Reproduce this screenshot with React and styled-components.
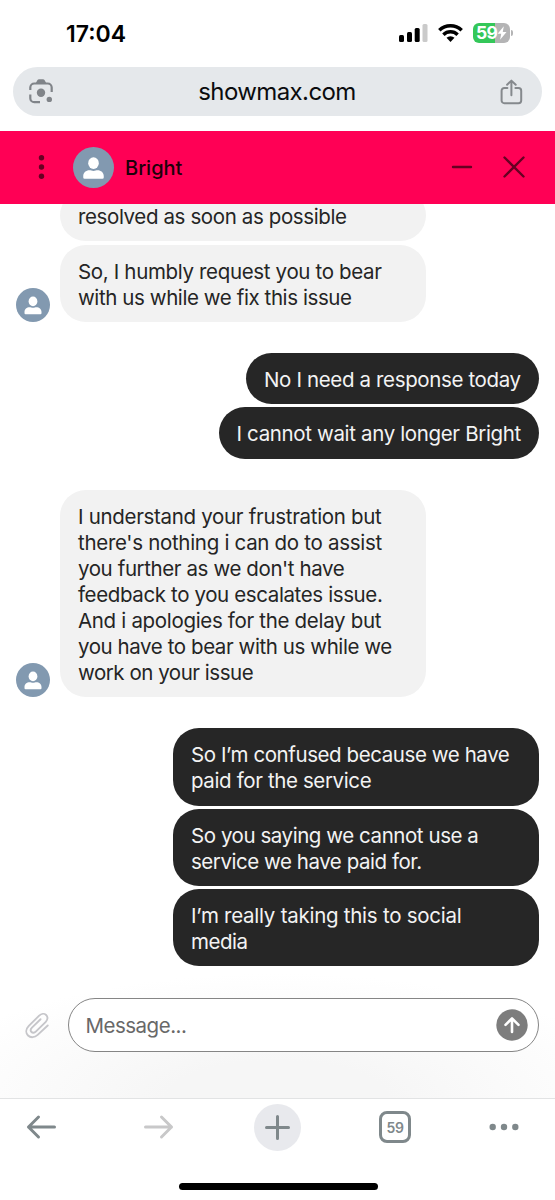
import React from 'react'
import styled, { createGlobalStyle } from 'styled-components'

const GlobalStyle = createGlobalStyle`
   * {
      box-sizing:border-box;
   }

   body {
      margin:0;
      background:#fff;
      font-family:Inter, "Liberation Sans", sans-serif;
   }

   svg {
      display:block;
      flex:none;
   }
`

const Screen = styled.div`
   display:flex;
   flex-direction:column;
   width:555px;
   height:1200px;
   overflow:hidden;
   background:#fff;
`

const StatusBar = styled.div`
   display:flex;
   justify-content:space-between;
   align-items:center;
   height:67px;
   padding:0 42px 0 66px;
`

const Clock = styled.span`
   font-size:23px;
   font-weight:600;
   line-height:28px;
   color:#000;
`

const StatusIcons = styled.div`
   display:flex;
   align-items:center;
   gap:10px;
   padding-bottom:1px;
`

const Battery = styled.div`
   display:flex;
   align-items:center;
   gap:1px;
`

const BatteryBody = styled.div`
   display:flex;
   align-items:center;
   justify-content:center;
   width:37px;
   height:20px;
   border-radius:6px;
   background:linear-gradient(90deg, #34c759 59%, #b4b4b5 59%);
   color:#fff;
   font-size:17.5px;
   font-weight:700;
   line-height:20px;
   letter-spacing:-0.9px;
`

const BatteryTip = styled.div`
   width:2px;
   height:6px;
   border-radius:0 2px 2px 0;
   background:#b4b4b5;
`

const AddressBar = styled.div`
   display:flex;
   align-items:center;
   justify-content:space-between;
   height:49px;
   margin:0 13px 14.5px;
   padding:0 19px 0 15px;
   border-radius:25px;
   background:#e5e8eb;
`

const Address = styled.span`
   font-size:24px;
   line-height:30px;
   letter-spacing:-0.6px;
   color:#0b0c0e;
`

const ChatHeader = styled.header`
   display:flex;
   align-items:center;
   height:73px;
   padding:0 30.5px 0 36px;
   background:#ff0055;
`

const Agent = styled.div`
   flex:1;
   margin-left:11px;
   padding-top:1px;
   font-size:20px;
   font-weight:500;
   line-height:26px;
   color:#1c0009;
`

const Avatar = styled.div`
   display:flex;
   flex:none;
   width:${props => props.$size}px;
   height:${props => props.$size}px;
   margin-left:${props => props.$left || 0}px;
   border-radius:50%;
   background:#8299b0;
`

const HeaderIcons = styled.div`
   display:flex;
   align-items:center;
   gap:30px;
`

const Messages = styled.main`
   display:flex;
   flex-direction:column;
   justify-content:flex-end;
   gap:31.3px;
   height:763px;
   padding:0 16px 0.2px 15.5px;
   overflow:hidden;
`

const Group = styled.section`
   display:flex;
   flex:none;
   align-items:flex-end;
   gap:10.5px;
   justify-content:${props => props.$mine ? 'flex-end' : 'flex-start'};
`

const Bubbles = styled.div`
   display:flex;
   flex-direction:column;
   align-items:${props => props.$mine ? 'flex-end' : 'flex-start'};
   gap:3.2px;
`

const Bubble = styled.div`
   width:${props => props.$width}px;
   padding:14px 0 11.2px 18px;
   border-radius:26px;
   background:${props => props.$mine ? '#262626' : '#f2f2f2'};
   color:${props => props.$mine ? '#f3f3f3' : '#252525'};
`

const Line = styled.div`
   font-size:20.5px;
   line-height:26px;
   letter-spacing:${props => props.$spacing || 0}px;
   white-space:nowrap;
`

const Composer = styled.footer`
   display:flex;
   align-items:center;
   height:131px;
   padding:0 16px 15px 22.5px;
   gap:17px;
   background:radial-gradient(ellipse 66% 95% at 50% 100%, #f6f6f6 30%, #fff 100%);
`

const Field = styled.div`
   display:flex;
   flex:1;
   align-items:center;
   justify-content:space-between;
   height:54px;
   padding:0 10px 0 17px;
   border:1px solid #858585;
   border-radius:27px;
   background:#fff;
   color:#686868;
`

const Placeholder = styled(Line)`
   padding-top:2px;
`

const Toolbar = styled.nav`
   display:grid;
   grid-template-columns:82px 154px 83px 152px 66px;
   justify-items:center;
   align-items:center;
   height:58px;
   border-top:1px solid #e2e3e4;
`

const NewTab = styled.div`
   display:flex;
   align-items:center;
   justify-content:center;
   width:47px;
   height:47px;
   border-radius:50%;
   background:#e8e9ed;
`

const TabCount = styled.div`
   display:flex;
   align-items:center;
   justify-content:center;
   width:32px;
   height:32px;
   border:3px solid #7f888b;
   border-radius:8px;
   color:#7f888b;
   font-size:14px;
   font-weight:600;
   letter-spacing:-0.3px;
`

const HomeIndicator = styled.div`
   width:199px;
   height:7px;
   margin:27px 0 0 178.5px;
   border-radius:4px;
   background:#000;
`

const Signal = () => (
   <svg width="29" height="18" viewBox="0 0 29 18">
      <rect x="0" y="11" width="5" height="7" rx="1.5" fill="#000" />
      <rect x="8" y="8" width="5" height="10" rx="1.5" fill="#000" />
      <rect x="15.7" y="4" width="5" height="14" rx="1.5" fill="#000" />
      <rect x="23.5" y="0" width="5" height="18" rx="1.5" fill="#cacaca" />
   </svg>
)

const Wifi = () => (
   <svg width="25" height="18" viewBox="0 0 25 18">
      <g fill="none" stroke="#000" strokeWidth="3.4">
         <path d="M1.3 6.3a16 16 0 0 1 22.4 0" />
         <path d="M5.4 10.7a10 10 0 0 1 14.2 0" />
      </g>
      <path d="M8.5 13.8a5.8 5.8 0 0 1 8 0L12.5 18z" fill="#000" />
   </svg>
)

const Bolt = () => (
   <svg width="10" height="14" viewBox="0 0 9 13">
      <path d="M6.2.3.4 7.3h3.4L2.7 12.7 8.7 5.5H5.2z" fill="#fff" />
   </svg>
)

const Lens = () => (
   <svg width="26" height="25" viewBox="0 0 26 25">
      <path d="M2.3 11V8.500a4 4 0 0 1 4-4h13.400a4 4 0 0 1 4 4V13M2.300 15.500v3.700a4 4 0 0 0 4 4H12" fill="none" stroke="#808489" strokeWidth="2.2" />
      <path d="M7.5 4.5 9.5.9Q10 .2 11 .2h4q1 0 1.5.7l2 3.6z" fill="#808489" />
      <circle cx="13" cy="13.7" r="4.2" fill="#808489" />
      <circle cx="21.3" cy="20.4" r="2.7" fill="#808489" />
   </svg>
)

const Share = () => (
   <svg width="23" height="26" viewBox="0 0 23 26" fill="none" stroke="#85898d" strokeWidth="2" strokeLinecap="round" strokeLinejoin="round">
      <path d="M7.4 9H4.3a2.7 2.7 0 0 0-2.7 2.7v9.8a2.7 2.7 0 0 0 2.7 2.7h14.2a2.7 2.7 0 0 0 2.7-2.7v-9.8A2.7 2.7 0 0 0 18.5 9h-3.1" />
      <path d="M11.4 16.3V1.8M7.1 5.8l4.3-4.2 4.3 4.2" />
   </svg>
)

const Person = ({ size }) => (
   <svg width={size} height={size} viewBox="0 0 34 34" fill="#fff">
      <ellipse cx="17" cy="13.4" rx="4.4" ry="4.8" />
      <path d="M8.5 25.2V24c0-2.7 2.3-4.7 5.1-4.700 1.200 0 2 .5 3.400.5s2.200-.5 3.400-.5c2.800 0 5.100 2 5.100 4.700v1.200q0 1.100-1.100 1.100H9.600q-1.100 0-1.100-1.100z" />
   </svg>
)

const Kebab = () => (
   <svg width="11" height="26" viewBox="0 0 11 26" fill="#660022">
      <circle cx="5.5" cy="3.7" r="2.7" />
      <circle cx="5.5" cy="13" r="2.7" />
      <circle cx="5.5" cy="22.2" r="2.7" />
   </svg>
)

const Minimise = () => (
   <svg width="22" height="22" viewBox="0 0 22 22">
      <path d="M2 11h18" stroke="#660022" strokeWidth="2.4" strokeLinecap="round" />
   </svg>
)

const Close = () => (
   <svg width="22" height="22" viewBox="0 0 22 22">
      <path d="M1.5 1.5l19 19M20.5 1.5l-19 19" stroke="#660022" strokeWidth="2.4" strokeLinecap="round" />
   </svg>
)

const Paperclip = () => (
   <svg width="28" height="28" viewBox="0 0 28 30" fill="none" stroke="#c6c6ca" strokeWidth="2" strokeLinecap="round" strokeLinejoin="round">
      <path d="M25.5 15.5 14.7 25.6c-3.2 3-7.6 3.3-10.3.7-2.7-2.7-2.4-6.9.6-10L16.3 5c2.3-2.3 5.5-2.6 7.5-.7s1.9 5-.4 7.3L12.7 22.1c-1.5 1.5-3.4 1.6-4.6.4s-1-3.1.5-4.6l9.2-9.1" />
   </svg>
)

const Send = () => (
   <svg width="32" height="32" viewBox="0 0 32 32">
      <circle cx="16" cy="16" r="15.7" fill="#7d7d7d" />
      <path d="M16 23V9.5M9.500 15.800 16 9.300l6.500 6.500" fill="none" stroke="#fff" strokeWidth="2.6" strokeLinecap="round" strokeLinejoin="round" />
   </svg>
)

const Arrow = ({ color, forward }) => (
   <svg width="30" height="26" viewBox="0 0 30 26" fill="none" stroke={color} strokeWidth="3" strokeLinecap="round" strokeLinejoin="round">
      <path d={forward ? 'M1.5 13h26M17.5 3l10 10-10 10' : 'M28.5 13h-26M12.5 3l-10 10 10 10'} />
   </svg>
)

const Plus = () => (
   <svg width="25" height="25" viewBox="0 0 25 25" stroke="#7f888b" strokeWidth="3" strokeLinecap="round">
      <path d="M1.5 12.5h22M12.5 1.5v22" />
   </svg>
)

const More = () => (
   <svg width="30" height="8" viewBox="0 0 30 8" fill="#7f888b">
      <circle cx="3.7" cy="4" r="3.2" />
      <circle cx="15" cy="4" r="3.2" />
      <circle cx="26.3" cy="4" r="3.2" />
   </svg>
)

// each line is [text, letter spacing]
const conversation = [
   {
      bubbles: [
         { width: 366, lines: [['resolved as soon as possible', -0.38]] },
         { width: 366, lines: [['So, I humbly request you to bear', -0.34], ['with us while we fix this issue', -0.41]] },
      ],
   },
   {
      mine: true,
      bubbles: [
         { width: 293, lines: [['No I need a response today', -0.36]] },
         { width: 320.5, lines: [['I cannot wait any longer Bright', -0.35]] },
      ],
   },
   {
      bubbles: [
         {
            width: 366,
            lines: [
               ['I understand your frustration but', -0.31],
               ["there's nothing i can do to assist", -0.3],
               ["you further as we don't have", -0.4],
               ['feedback to you escalates issue.', -0.38],
               ['And i apologies for the delay but', -0.32],
               ['you have to bear with us while we', -0.42],
               ['work on your issue', -0.47],
            ],
         },
      ],
   },
   {
      mine: true,
      bubbles: [
         { width: 366, lines: [['So I’m confused because we have', -0.42], ['paid for the service', -0.38]] },
         { width: 366, lines: [['So you saying we cannot use a', -0.44], ['service we have paid for.', -0.46]] },
         { width: 366, lines: [['I’m really taking this to social', -0.26], ['media', -0.5]] },
      ],
   },
]

const App = () => (
   <Screen>
      <GlobalStyle />
      <StatusBar>
         <Clock>17:04</Clock>
         <StatusIcons>
            <Signal />
            <Wifi />
            <Battery>
               <BatteryBody>59<Bolt /></BatteryBody>
               <BatteryTip />
            </Battery>
         </StatusIcons>
      </StatusBar>
      <AddressBar>
         <Lens />
         <Address>showmax.com</Address>
         <Share />
      </AddressBar>
      <ChatHeader>
         <Kebab />
         <Avatar $size={41} $left={26}><Person size={41} /></Avatar>
         <Agent>Bright</Agent>
         <HeaderIcons>
            <Minimise />
            <Close />
         </HeaderIcons>
      </ChatHeader>
      <Messages>
         {conversation.map((group, i) => (
            <Group key={i} $mine={group.mine}>
               {!group.mine && <Avatar $size={34}><Person size={34} /></Avatar>}
               <Bubbles $mine={group.mine}>
                  {group.bubbles.map((bubble, j) => (
                     <Bubble key={j} $mine={group.mine} $width={bubble.width}>
                        {bubble.lines.map(([text, spacing]) => (
                           <Line key={text} $spacing={spacing}>{text}</Line>
                        ))}
                     </Bubble>
                  ))}
               </Bubbles>
            </Group>
         ))}
      </Messages>
      <Composer>
         <Paperclip />
         <Field>
            <Placeholder $spacing={-0.5}>Message...</Placeholder>
            <Send />
         </Field>
      </Composer>
      <Toolbar>
         <Arrow color="#7f888b" />
         <Arrow color="#c8c8c9" forward />
         <NewTab><Plus /></NewTab>
         <TabCount>59</TabCount>
         <More />
      </Toolbar>
      <HomeIndicator />
   </Screen>
)

export default App
